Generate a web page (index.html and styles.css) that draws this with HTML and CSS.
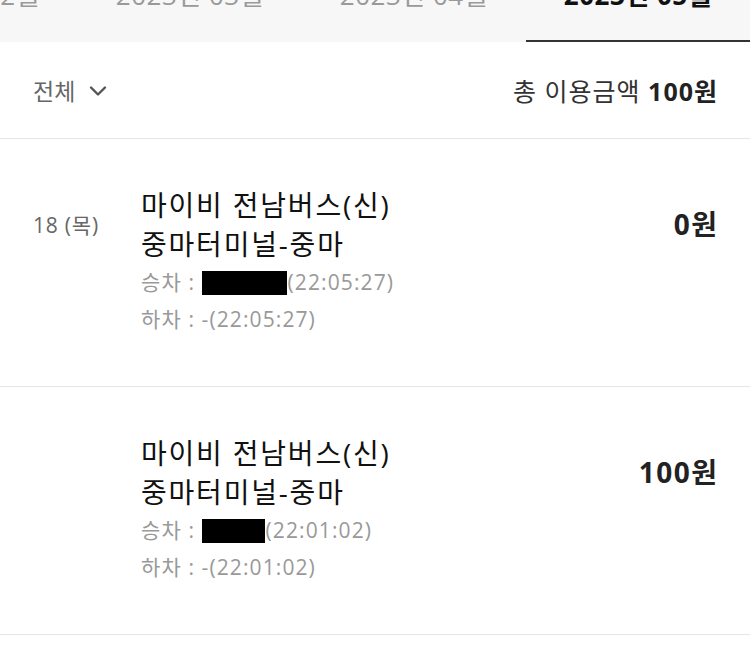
FILE: index.html
```html
<!DOCTYPE html>
<html lang="ko">
<head>
<meta charset="utf-8">
<link rel="stylesheet" href="styles.css">
</head>
<body>
<div class="tabs">
  <div class="tab-rail">
    <div class="tab"><span class="tab-label">2023년 02월</span></div>
    <div class="tab"><span class="tab-label">2023년 03월</span></div>
    <div class="tab"><span class="tab-label">2023년 04월</span></div>
    <div class="tab tab-active"><span class="tab-label">2023년 05월</span></div>
  </div>
</div>
<div class="filter">
  <div class="filter-select">
    <span>전체</span>
    <svg class="chevron" width="18" height="12" viewBox="0 0 18 12"><path d="M2 2.5 L9 9.5 L16 2.5" fill="none" stroke="#555" stroke-width="2.4" stroke-linecap="round" stroke-linejoin="round"/></svg>
  </div>
  <div class="total">총 이용금액 <b>100원</b></div>
</div>
<div class="row">
  <div class="date">18 (목)</div>
  <div class="body">
    <div class="title">마이비 전남버스(신)<br>중마터미널-중마</div>
    <div class="info">승차 : <span class="mask mask-long"></span>(22:05:27)</div>
    <div class="info">하차 : -(22:05:27)</div>
  </div>
  <div class="amount">0원</div>
</div>
<div class="row">
  <div class="date"></div>
  <div class="body">
    <div class="title">마이비 전남버스(신)<br>중마터미널-중마</div>
    <div class="info">승차 : <span class="mask mask-short"></span>(22:01:02)</div>
    <div class="info">하차 : -(22:01:02)</div>
  </div>
  <div class="amount">100원</div>
</div>
</body>
</html>
```

FILE: styles.css
```css
html, body {
  margin: 0;
  padding: 0;
  background: #fff;
}
body {
  font-family: "Open Sans", "Noto Sans CJK KR", sans-serif;
  color: #222;
  width: 750px;
  overflow: hidden;
}
.tabs {
  height: 42px;
  background: #f7f7f7;
  overflow: hidden;
}
.tab-rail {
  display: flex;
  margin-left: -146px;
}
.tab {
  flex: 0 0 224px;
  height: 42px;
  box-sizing: border-box;
  text-align: center;
}
.tab-label {
  display: block;
  font-size: 26px;
  line-height: 26px;
  margin-top: -18px;
  color: #9a9a9a;
  white-space: nowrap;
  letter-spacing: 0.5px;
}
.tab-active {
  border-bottom: 2px solid #333;
}
.tab-active .tab-label {
  color: #111;
  font-weight: 700;
}
.filter {
  height: 97px;
  box-sizing: border-box;
  border-bottom: 1px solid #e6e6e6;
  padding: 0 33px;
  display: flex;
  align-items: center;
  justify-content: space-between;
}
.filter-select {
  display: flex;
  align-items: center;
  gap: 14px;
  font-size: 23px;
  color: #666;
}
.chevron {
  margin-top: 2px;
}
.total {
  font-size: 25px;
  color: #333;
  letter-spacing: 1px;
  margin-right: -1px;
}
.total b {
  font-weight: 700;
  color: #222;
}
.row {
  height: 248px;
  box-sizing: border-box;
  border-bottom: 1px solid #e6e6e6;
  padding: 47px 33px 0 33px;
  display: flex;
  align-items: flex-start;
}
.date {
  flex: 0 0 108px;
  font-size: 21px;
  line-height: 39px;
  margin-top: 20px;
  color: #666;
  letter-spacing: 0.8px;
}
.body {
  flex: 1;
}
.title {
  font-size: 28px;
  line-height: 39px;
  color: #111;
  letter-spacing: 1.8px;
}
.info {
  font-size: 21px;
  line-height: 37px;
  color: #999;
  display: flex;
  align-items: center;
  white-space: pre;
  letter-spacing: 1.1px;
}
.mask {
  display: inline-block;
  background: #000;
  height: 24px;
  margin-right: 1px;
}
.mask-long {
  width: 85px;
}
.mask-short {
  width: 63px;
}
.amount {
  font-size: 28px;
  font-weight: 700;
  line-height: 39px;
  margin-top: 19px;
  color: #222;
  letter-spacing: 1.5px;
  margin-right: -1.5px;
}
```
